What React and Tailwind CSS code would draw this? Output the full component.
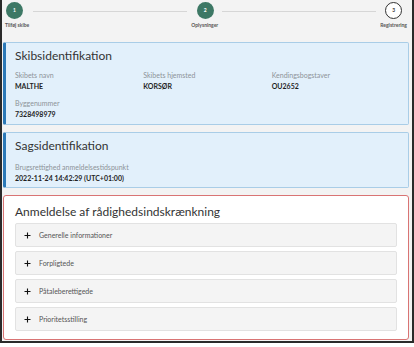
import React from "react";

const steps = [
  { n: "1", label: "Tilføj skibe", done: true },
  { n: "2", label: "Oplysninger", done: true },
  { n: "3", label: "Registrering", done: false },
];

const accordion = [
  "Generelle informationer",
  "Forpligtede",
  "Påtaleberettigede",
  "Prioritetsstilling",
];

function Step({ step, first }) {
  return (
    <div className={first ? "flex flex-col items-start" : "flex flex-col items-center"}>
      <div
        className={
          step.done
            ? "ml-px flex h-[17px] w-[17px] items-center justify-center rounded-full bg-[#3d7865] text-[5px] font-bold text-white"
            : "flex h-[17px] w-[17px] items-center justify-center rounded-full border border-[#333] bg-white text-[5px] font-bold text-[#333]"
        }
      >
        {step.n}
      </div>
      <div className="mt-[3px] text-[5px] font-bold leading-[6px] text-[#555]">
        {step.label}
      </div>
    </div>
  );
}

function Field({ label, value }) {
  return (
    <div>
      <div className="text-[7px] leading-[10px] text-[#8d9398]">{label}</div>
      <div className="mt-[1px] text-[7px] font-bold leading-[10px] text-[#1f1f1f]">
        {value}
      </div>
    </div>
  );
}

function InfoCard({ title, children }) {
  return (
    <div className="rounded-[2px] border border-l-[3px] border-[#a9cde7] border-l-[#2c79b7] bg-[#e2f0fb] pl-[9px] pr-2 pt-[5px]">
      <h2 className="text-[12px] leading-[16px] text-[#333]">{title}</h2>
      {children}
    </div>
  );
}

function AccordionItem({ label }) {
  return (
    <div className="flex h-[24px] items-center rounded-[2px] border border-[#e2e2e2] bg-[#f4f4f4] pl-[8px]">
      <svg width="7" height="7" viewBox="0 0 7 7" className="shrink-0">
        <path d="M3.5 0.5v6M0.5 3.5h6" stroke="#111" strokeWidth="1.1" />
      </svg>
      <span className="ml-[8px] text-[7px] text-[#555]">{label}</span>
    </div>
  );
}

export default function App() {
  return (
    <div className="h-[347px] w-[414px] bg-white font-['Lato',sans-serif]">
      <div className="h-[343px] overflow-hidden border-x-2 border-b-2 border-[#2a2a2a] bg-[#f3f3f3] pl-px pr-[3px]">
        <div className="flex items-start px-[2px] pt-[2px]">
          <Step step={steps[0]} first />
          <div className="mx-[4px] mt-[9px] h-px flex-1 bg-[#d6d6d6]" />
          <Step step={steps[1]} />
          <div className="mx-[4px] mt-[9px] h-px flex-1 bg-[#d6d6d6]" />
          <Step step={steps[2]} />
        </div>

        <div className="mt-[14px] flex flex-col gap-[7px]">
          <InfoCard title="Skibsidentifikation">
            <div className="mt-[6px] grid grid-cols-3 gap-y-[7px] pb-[5px]">
              <Field label="Skibets navn" value="MALTHE" />
              <Field label="Skibets hjemsted" value="KORSØR" />
              <Field label="Kendingsbogstaver" value="OU2652" />
              <Field label="Byggenummer" value="7328498979" />
            </div>
          </InfoCard>

          <InfoCard title="Sagsidentifikation">
            <div className="mt-[8px] pb-[4px]">
              <Field
                label="Brugsrettighed anmeldelsestidspunkt"
                value="2022-11-24 14:42:29 (UTC+01:00)"
              />
            </div>
          </InfoCard>

          <div className="rounded-[3px] border border-[#d97474] bg-white px-[11px] pb-[8px] pt-[8px]">
            <h2 className="text-[12px] leading-[16px] text-[#333]">
              Anmeldelse af rådighedsindskrænkning
            </h2>
            <div className="mt-[3px] flex flex-col gap-[4px]">
              {accordion.map((a) => (
                <AccordionItem key={a} label={a} />
              ))}
            </div>
          </div>
        </div>
      </div>
    </div>
  );
}
